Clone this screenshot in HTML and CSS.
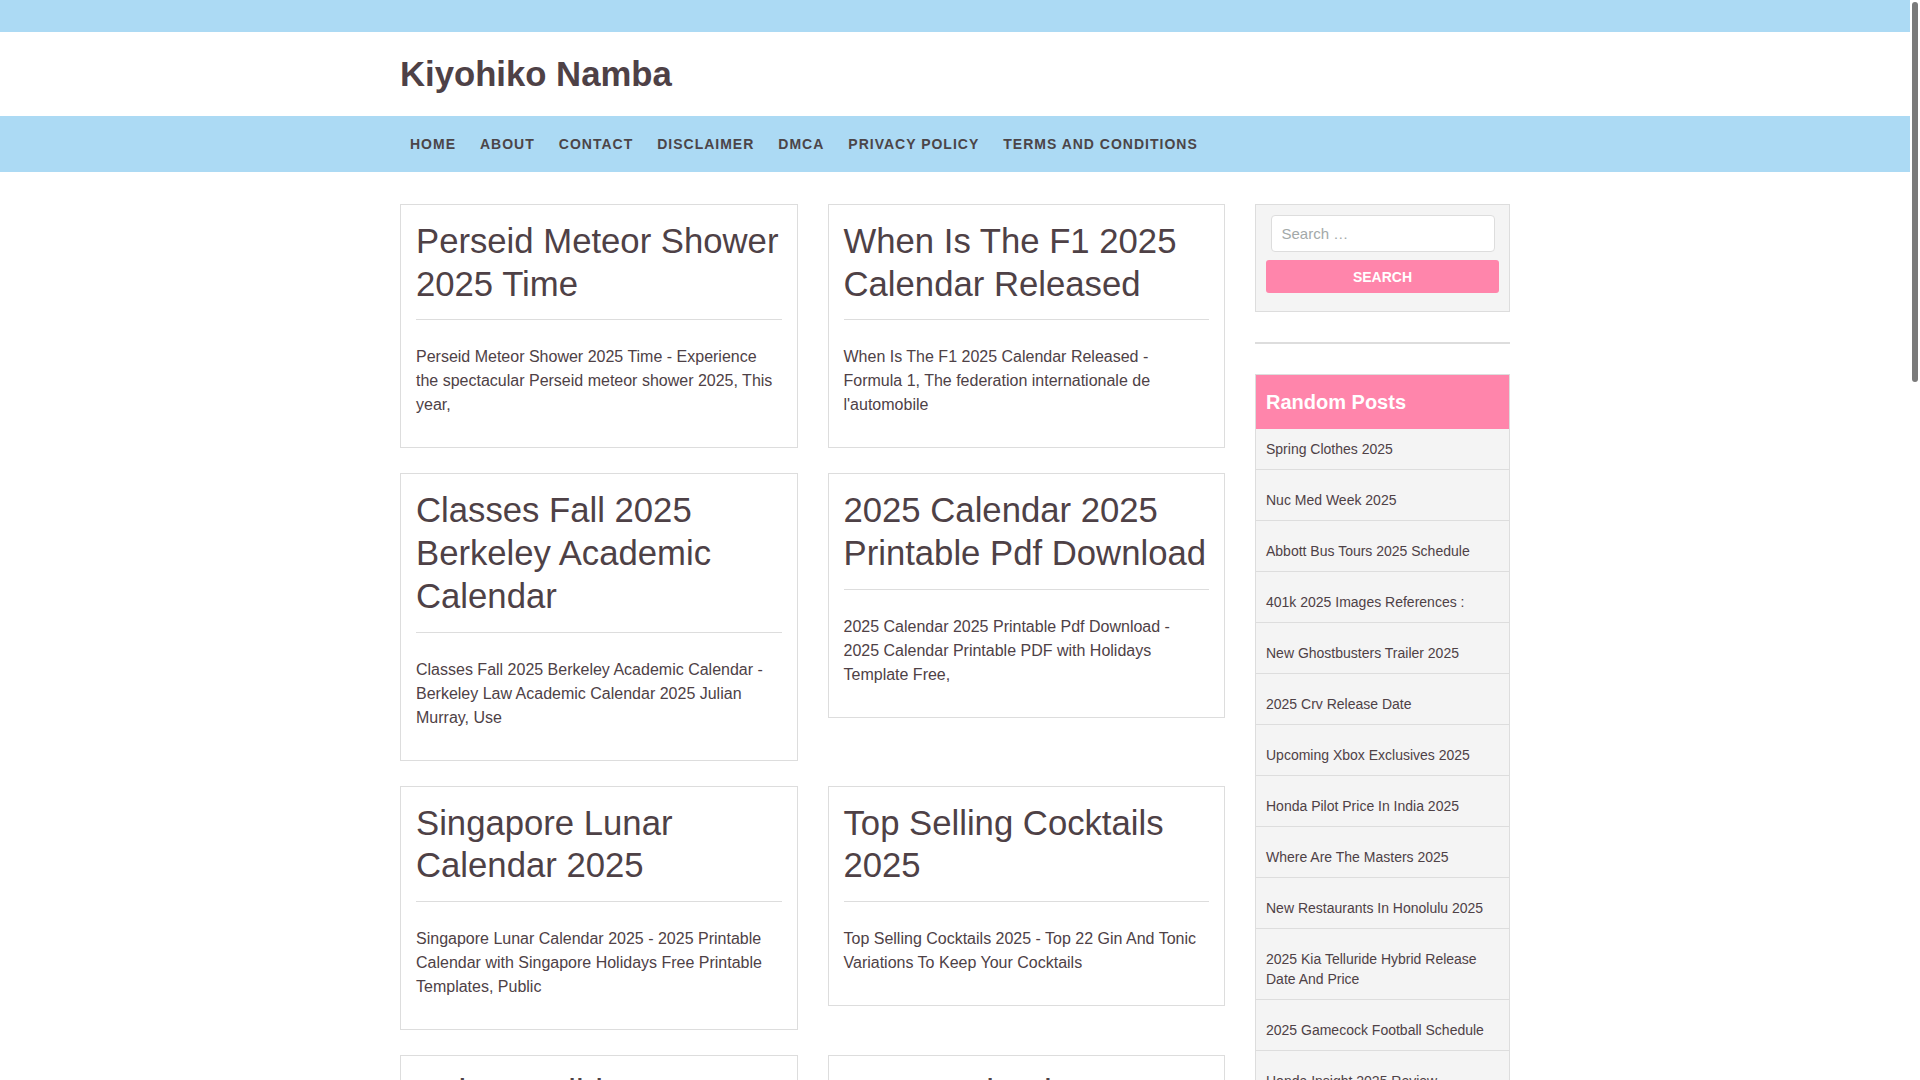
FILE: index.html
```html
<!DOCTYPE html>
<html lang="en">
<head>
<meta charset="utf-8">
<title>Kiyohiko Namba</title>
<link rel="stylesheet" href="styles.css">
</head>
<body>
<div class="topbar"></div>
<header class="site-header">
  <div class="wrap">
    <h1 class="site-title">Kiyohiko Namba</h1>
  </div>
</header>
<nav class="main-nav">
  <div class="wrap">
    <ul>
      <li><a href="#">Home</a></li>
      <li><a href="#">About</a></li>
      <li><a href="#">Contact</a></li>
      <li><a href="#">Disclaimer</a></li>
      <li><a href="#">DMCA</a></li>
      <li><a href="#">Privacy Policy</a></li>
      <li><a href="#">Terms and Conditions</a></li>
    </ul>
  </div>
</nav>
<div class="content">
  <main class="posts">
    <article class="card">
      <h2>Perseid Meteor Shower 2025 Time</h2>
      <hr>
      <p>Perseid Meteor Shower 2025 Time - Experience the spectacular Perseid meteor shower 2025, This year,</p>
    </article>
    <article class="card">
      <h2>When Is The F1 2025 Calendar Released</h2>
      <hr>
      <p>When Is The F1 2025 Calendar Released - Formula 1, The federation internationale de l'automobile</p>
    </article>
    <article class="card">
      <h2>Classes Fall 2025 Berkeley Academic Calendar</h2>
      <hr>
      <p>Classes Fall 2025 Berkeley Academic Calendar - Berkeley Law Academic Calendar 2025 Julian Murray, Use</p>
    </article>
    <article class="card">
      <h2>2025 Calendar 2025 Printable Pdf Download</h2>
      <hr>
      <p>2025 Calendar 2025 Printable Pdf Download - 2025 Calendar Printable PDF with Holidays Template Free,</p>
    </article>
    <article class="card">
      <h2>Singapore Lunar Calendar 2025</h2>
      <hr>
      <p>Singapore Lunar Calendar 2025 - 2025 Printable Calendar with Singapore Holidays Free Printable Templates, Public</p>
    </article>
    <article class="card">
      <h2>Top Selling Cocktails 2025</h2>
      <hr>
      <p>Top Selling Cocktails 2025 - Top 22 Gin And Tonic Variations To Keep Your Cocktails</p>
    </article>
    <article class="card">
      <h2>Kaiser Holiday Calendar 2025</h2>
      <hr>
      <p>Kaiser Holiday Calendar 2025 - Kaiser Permanente Holiday Schedule 2025,</p>
    </article>
    <article class="card">
      <h2>Lunar Calendar 2025 Printable</h2>
      <hr>
      <p>Lunar Calendar 2025 Printable - Free Printable Lunar Calendar 2025 Templates,</p>
    </article>
  </main>
  <aside class="sidebar">
    <section class="widget search-widget">
      <form class="search-form">
        <input class="search-field" type="search" placeholder="Search &hellip;">
        <button class="search-submit" type="button">Search</button>
      </form>
    </section>
    <section class="widget empty-widget"></section>
    <section class="widget posts-widget">
      <h3 class="widget-title">Random Posts</h3>
      <ul>
        <li><a href="#">Spring Clothes 2025</a></li>
        <li><a href="#">Nuc Med Week 2025</a></li>
        <li><a href="#">Abbott Bus Tours 2025 Schedule</a></li>
        <li><a href="#">401k 2025 Images References :</a></li>
        <li><a href="#">New Ghostbusters Trailer 2025</a></li>
        <li><a href="#">2025 Crv Release Date</a></li>
        <li><a href="#">Upcoming Xbox Exclusives 2025</a></li>
        <li><a href="#">Honda Pilot Price In India 2025</a></li>
        <li><a href="#">Where Are The Masters 2025</a></li>
        <li><a href="#">New Restaurants In Honolulu 2025</a></li>
        <li><a href="#">2025 Kia Telluride Hybrid Release Date And Price</a></li>
        <li><a href="#">2025 Gamecock Football Schedule</a></li>
        <li><a href="#">Honda Insight 2025 Review</a></li>
      </ul>
    </section>
  </aside>
</div>
<div class="scrollbar" aria-hidden="true"><div class="scrollbar-thumb"></div></div>
</body>
</html>
```

FILE: styles.css
```css
html, body {
  margin: 0;
  padding: 0;
}

body {
  margin-right: 10px;
  font-family: "Liberation Sans", Arial, sans-serif;
  color: #4e4146;
  background: #ffffff;
}

a {
  color: inherit;
  text-decoration: none;
}

.topbar {
  height: 32px;
  background: #acdaf4;
}

.wrap {
  width: 1110px;
  margin: 0 auto;
}

.site-header .wrap {
  height: 84px;
  display: flex;
  align-items: center;
}

.site-title {
  margin: 0;
  font-size: 34.7px;
  line-height: 38px;
  font-weight: 700;
  color: #4e4146;
}

.main-nav {
  background: #acdaf4;
}

.main-nav ul {
  list-style: none;
  margin: 0 0 0 -2px;
  padding: 0;
  display: flex;
}

.main-nav a {
  display: block;
  padding: 18px 12px;
  font-size: 14px;
  line-height: 20px;
  font-weight: 700;
  letter-spacing: 1px;
  text-transform: uppercase;
  color: #4b4548;
}

.content {
  width: 1110px;
  margin: 32px auto 40px;
  display: grid;
  grid-template-columns: 1fr 255px;
  column-gap: 30px;
  align-items: start;
}

.posts {
  display: grid;
  grid-template-columns: 1fr 1fr;
  column-gap: 30px;
  row-gap: 25px;
  align-items: start;
}

.card {
  border: 1px solid #dddddd;
  padding: 15px;
  background: #ffffff;
}

.card h2 {
  margin: 0 0 14px;
  font-size: 34.7px;
  line-height: 42.7px;
  font-weight: 400;
}

.card hr {
  border: 0;
  border-top: 1px solid #dddddd;
  margin: 0 0 25px;
  height: 0;
}

.card p {
  margin: 0 0 15px;
  font-size: 16px;
  line-height: 24px;
}

.widget {
  margin-bottom: 30px;
}

.search-widget {
  border: 1px solid #dddddd;
  background: #f4f4f4;
  padding: 10px 10px 18px;
}

.search-form {
  margin: 0;
}

.search-field {
  display: block;
  box-sizing: border-box;
  width: 224px;
  height: 37px;
  margin: 0 auto 8px;
  padding: 0 10px;
  border: 1px solid #dddddd;
  border-radius: 4px;
  background: #ffffff;
  font-family: "Liberation Sans", Arial, sans-serif;
  font-size: 15px;
  color: #4e4146;
  outline: none;
}

.search-field::placeholder {
  color: #a3a9a9;
}

.search-submit {
  display: block;
  width: 100%;
  height: 33px;
  border: 0;
  border-radius: 3px;
  background: #ff85ab;
  color: #ffffff;
  font-family: "Liberation Sans", Arial, sans-serif;
  font-size: 14px;
  font-weight: 700;
  text-transform: uppercase;
  cursor: pointer;
}

.empty-widget {
  border: 1px solid #dddddd;
}

.posts-widget {
  border: 1px solid #dddddd;
  background: #f4f4f4;
}

.widget-title {
  margin: 0;
  padding: 15px 8px 15px 10px;
  background: #ff85ab;
  color: #ffffff;
  font-size: 20px;
  line-height: 24px;
  font-weight: 700;
}

.posts-widget ul {
  list-style: none;
  margin: 0;
  padding: 0;
}

.posts-widget li {
  padding: 20px 10px 10px;
  border-bottom: 1px solid #dddddd;
  font-size: 14px;
  line-height: 20px;
}

.posts-widget li:first-child {
  padding-top: 10px;
}

.posts-widget li:last-child {
  border-bottom: 0;
}

.scrollbar {
  position: fixed;
  top: 0;
  right: 0;
  width: 10px;
  height: 100vh;
  background: #ffffff;
}

.scrollbar-thumb {
  width: 6px;
  height: 380px;
  margin: 2px 0 0 2px;
  border-radius: 3px;
  background: #7a7a7a;
}
```
